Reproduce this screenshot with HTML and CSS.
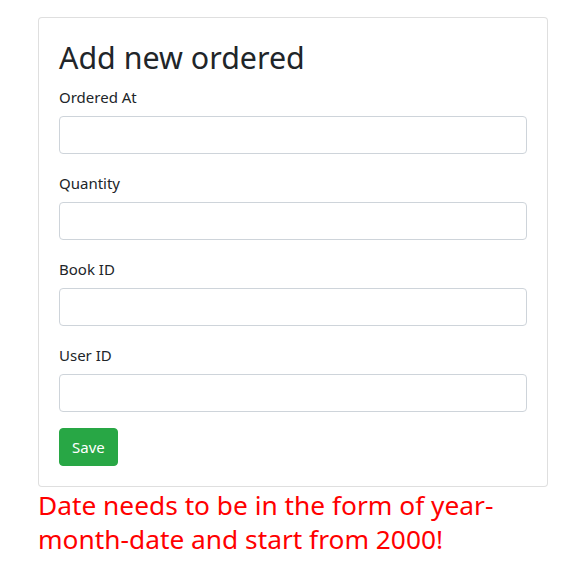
FILE: index.html
```html
<!DOCTYPE html>
<html lang="en">
<head>
<meta charset="utf-8">
<title>Add new ordered</title>
<link rel="stylesheet" href="styles.css">
</head>
<body>
<div class="page">
  <div class="card">
    <h2 class="card-title">Add new ordered</h2>
    <form class="form">
      <div class="form-group">
        <label class="form-label" for="orderedAt">Ordered At</label>
        <input class="form-control" id="orderedAt" type="text">
      </div>
      <div class="form-group">
        <label class="form-label" for="quantity">Quantity</label>
        <input class="form-control" id="quantity" type="text">
      </div>
      <div class="form-group">
        <label class="form-label" for="bookId">Book ID</label>
        <input class="form-control" id="bookId" type="text">
      </div>
      <div class="form-group">
        <label class="form-label" for="userId">User ID</label>
        <input class="form-control" id="userId" type="text">
      </div>
      <button class="btn-save" type="button">Save</button>
    </form>
  </div>
  <p class="error-text">Date needs to be in the form of year-month-date and start from 2000!</p>
</div>
</body>
</html>
```
FILE: styles.css
```css
* { box-sizing: border-box; }
html, body { margin: 0; padding: 0; background: #fff; }
body {
  font-family: "Noto Sans", "Open Sans", "DejaVu Sans", sans-serif;
  font-size: 16px;
  line-height: 1.5;
  color: #212529;
}
.page {
  width: 548px;
  padding: 17px 0 0 38px;
}
.card {
  width: 510px;
  border: 1px solid rgba(0,0,0,.125);
  border-radius: 4px;
  padding: 20px;
  background: #fff;
}
.card-title {
  margin: 0 0 8px;
  padding-top: 2px;
  height: 38.4px;
  font-size: 30.4px;
  font-weight: 400;
  line-height: 36.4px;
  color: #212529;
}
.form { margin: 0; }
.form-group { margin-bottom: 16px; }
.form-label {
  display: block;
  margin-bottom: 8px;
  font-size: 15px;
  line-height: 24px;
  padding-top: 1px;
  height: 24px;
}
.form-control {
  display: block;
  width: 100%;
  height: 38px;
  padding: 6px 12px;
  font: inherit;
  border: 1px solid #ced4da;
  border-radius: 4px;
  background: #fff;
}
.btn-save {
  display: block;
  height: 38px;
  padding: 6px 12px;
  font-family: inherit;
  font-size: 15px;
  line-height: 24px;
  color: #fff;
  background: #28a745;
  border: 1px solid #28a745;
  border-radius: 4px;
}
.error-text {
  margin: 0;
  padding-top: 2px;
  width: 510px;
  color: #ff0000;
  font-size: 26.3px;
  line-height: 33.6px;
}
```
